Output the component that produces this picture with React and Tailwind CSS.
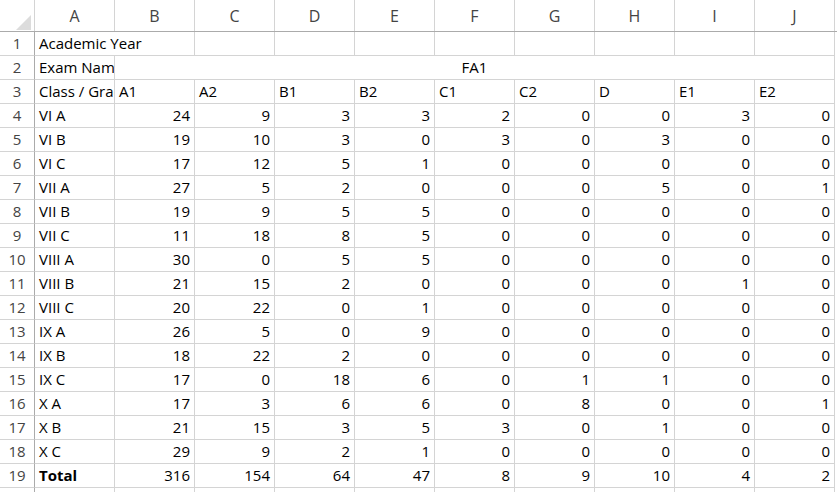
import React from "react";

// Excel-style sheet: grade distribution per class for exam FA1
const COLS = ["A", "B", "C", "D", "E", "F", "G", "H", "I", "J"];
const GRADES = ["A1", "A2", "B1", "B2", "C1", "C2", "D", "E1", "E2"];

const ROWS = [
    ["VI A", 24, 9, 3, 3, 2, 0, 0, 3, 0],
    ["VI B", 19, 10, 3, 0, 3, 0, 3, 0, 0],
    ["VI C", 17, 12, 5, 1, 0, 0, 0, 0, 0],
    ["VII A", 27, 5, 2, 0, 0, 0, 5, 0, 1],
    ["VII B", 19, 9, 5, 5, 0, 0, 0, 0, 0],
    ["VII C", 11, 18, 8, 5, 0, 0, 0, 0, 0],
    ["VIII A", 30, 0, 5, 5, 0, 0, 0, 0, 0],
    ["VIII B", 21, 15, 2, 0, 0, 0, 0, 1, 0],
    ["VIII C", 20, 22, 0, 1, 0, 0, 0, 0, 0],
    ["IX A", 26, 5, 0, 9, 0, 0, 0, 0, 0],
    ["IX B", 18, 22, 2, 0, 0, 0, 0, 0, 0],
    ["IX C", 17, 0, 18, 6, 0, 1, 1, 0, 0],
    ["X A", 17, 3, 6, 6, 0, 8, 0, 0, 1],
    ["X B", 21, 15, 3, 5, 3, 0, 1, 0, 0],
    ["X C", 29, 9, 2, 1, 0, 0, 0, 0, 0],
    ["Total", 316, 154, 64, 47, 8, 9, 10, 4, 2],
];

const font = { fontFamily: "'Open Sans', 'Liberation Sans', sans-serif" };

function RowHead({ n }) {
    return (
        <div className="w-[35px] h-[24px] shrink-0 border-r border-r-[#ababab] border-b border-b-[#d4d4d4] flex items-center justify-center text-[15px] text-[#444]">
            {n}
        </div>
    );
}

function Cell({ children, right, bold, clip }) {
    return (
        <div
            className={`w-[80px] h-[24px] shrink-0 border-r border-b border-[#d4d4d4] flex items-center px-[4px] text-[15px] text-black whitespace-nowrap ${right ? "justify-end" : ""} ${bold ? "font-bold" : ""} ${clip ? "overflow-hidden" : ""}`}
        >
            {children}
        </div>
    );
}

export default function App() {
    return (
        <div className="w-[837px] h-[492px] overflow-hidden bg-white" style={font}>
            {/* column letters */}
            <div className="flex h-[32px] border-b border-[#ababab]">
                <div className="w-[35px] h-full shrink-0 border-r border-[#d4d4d4] relative">
                    <svg className="absolute left-[16px] top-[15px]" width="15" height="15" viewBox="0 0 15 15">
                        <polygon points="15,0 15,15 0,15" fill="#dcdcdc" />
                    </svg>
                </div>
                {COLS.map((c) => (
                    <div key={c} className="w-[80px] shrink-0 border-r border-[#d4d4d4] flex items-center justify-center text-[16px] text-[#444]">
                        {c}
                    </div>
                ))}
            </div>

            {/* row 1 */}
            <div className="flex">
                <RowHead n={1} />
                <div className="w-[80px] h-[24px] shrink-0 border-b border-[#d4d4d4] flex items-center px-[4px] text-[15px] whitespace-nowrap">
                    Academic Year
                </div>
                <div className="w-[80px] h-[24px] shrink-0 border-r border-b border-[#d4d4d4]" />
                {COLS.slice(2).map((c) => (
                    <Cell key={c} />
                ))}
            </div>

            {/* row 2 */}
            <div className="flex">
                <RowHead n={2} />
                <Cell clip>Exam Name</Cell>
                <div className="w-[720px] h-[24px] shrink-0 border-r border-b border-[#d4d4d4] flex items-center justify-center text-[15px]">
                    FA1
                </div>
            </div>

            {/* row 3 */}
            <div className="flex">
                <RowHead n={3} />
                <Cell clip>Class / Grade</Cell>
                {GRADES.map((g) => (
                    <Cell key={g}>{g}</Cell>
                ))}
            </div>

            {ROWS.map((r, i) => (
                <div key={r[0]} className="flex">
                    <RowHead n={i + 4} />
                    <Cell bold={r[0] === "Total"}>{r[0]}</Cell>
                    {r.slice(1).map((v, j) => (
                        <Cell key={j} right>
                            {v}
                        </Cell>
                    ))}
                </div>
            ))}

            <div className="flex">
                <div className="w-[35px] h-[24px] shrink-0 border-r border-[#ababab]" />
                {COLS.map((c) => (
                    <Cell key={c} />
                ))}
            </div>
        </div>
    );
}
